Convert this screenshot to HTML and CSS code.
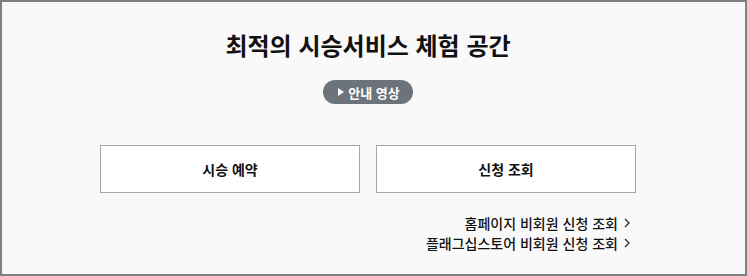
FILE: index.html
```html
<!DOCTYPE html>
<html lang="ko">
<head>
<meta charset="utf-8">
<link rel="stylesheet" href="styles.css">
</head>
<body>
<div class="page">
  <div class="inner">
    <h1 class="title">최적의 시승서비스 체험 공간</h1>
    <button class="pill" type="button"><span class="tri"></span>안내 영상</button>
    <div class="boxes">
      <a class="box" href="#">시승 예약</a>
      <a class="box" href="#">신청 조회</a>
    </div>
    <div class="links">
      <a class="link" href="#">홈페이지 비회원 신청 조회<svg class="chev" viewBox="0 0 6 10" width="6" height="10"><path d="M1 1 L5 5 L1 9" fill="none" stroke="#333" stroke-width="1.4"/></svg></a>
      <a class="link" href="#">플래그십스토어 비회원 신청 조회<svg class="chev" viewBox="0 0 6 10" width="6" height="10"><path d="M1 1 L5 5 L1 9" fill="none" stroke="#333" stroke-width="1.4"/></svg></a>
    </div>
  </div>
</div>
</body>
</html>
```
FILE: styles.css
```css
html, body {
  margin: 0;
  padding: 0;
}
body {
  font-family: "Noto Sans CJK KR", "Noto Sans", sans-serif;
  color: #111;
}
.page {
  box-sizing: border-box;
  width: 747px;
  height: 276px;
  border: 2px solid #808080;
  background: #f9f9f9;
  padding: 27px 0 0 98px;
}
.inner {
  width: 536px;
  display: flex;
  flex-direction: column;
  align-items: center;
}
.title {
  margin: 0;
  font-size: 24px;
  font-weight: 700;
  line-height: 32px;
  color: #111;
}
.pill {
  margin-top: 19px;
  height: 24px;
  padding: 0 13px 0 15px;
  border: 0;
  border-radius: 12px;
  background: #6c737a;
  color: #fff;
  font-family: inherit;
  font-size: 13px;
  font-weight: 700;
  display: flex;
  align-items: center;
  gap: 4px;
}
.tri {
  width: 0;
  height: 0;
  border-left: 6px solid #fff;
  border-top: 4px solid transparent;
  border-bottom: 4px solid transparent;
}
.boxes {
  margin-top: 41px;
  display: flex;
  gap: 16px;
  width: 100%;
}
.box {
  flex: 1;
  box-sizing: border-box;
  height: 48px;
  border: 1px solid #a8a8a8;
  background: #fff;
  display: flex;
  align-items: center;
  justify-content: center;
  font-size: 14px;
  font-weight: 700;
  color: #111;
  text-decoration: none;
}
.links {
  align-self: stretch;
  margin-top: 20px;
  padding-right: 6px;
  display: flex;
  flex-direction: column;
  align-items: flex-end;
}
.link {
  display: flex;
  align-items: center;
  gap: 6px;
  font-size: 14px;
  font-weight: 500;
  line-height: 20px;
  color: #111;
  text-decoration: none;
}
.chev {
  display: block;
}
```
